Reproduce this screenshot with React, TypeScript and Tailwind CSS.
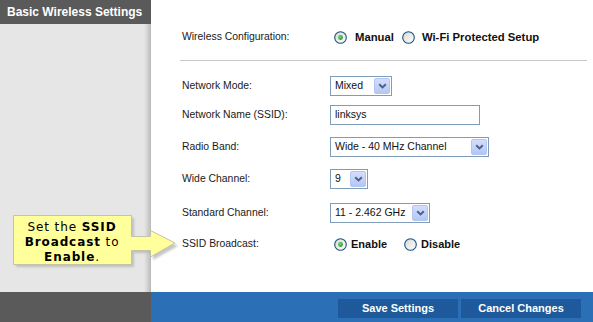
import React from "react";

const font = { fontFamily: '"Liberation Sans", Arial, sans-serif' };

function Radio({ checked }: { checked?: boolean }) {
  return (
    <svg width="13" height="13" viewBox="0 0 13 13" className="shrink-0">
      <defs>
        <linearGradient id="rg" x1="0" y1="0" x2="1" y2="1">
          <stop offset="0" stopColor="#d8d8d2" />
          <stop offset="1" stopColor="#ffffff" />
        </linearGradient>
        <radialGradient id="dot" cx="0.4" cy="0.4" r="0.6">
          <stop offset="0" stopColor="#7be07b" />
          <stop offset="1" stopColor="#1e9a1e" />
        </radialGradient>
      </defs>
      <circle cx="6.5" cy="6.5" r="5.8" fill="url(#rg)" stroke="#1c5180" strokeWidth="1.1" />
      {checked && <circle cx="6.5" cy="6.5" r="2.4" fill="url(#dot)" />}
    </svg>
  );
}

function Chevron() {
  return (
    <svg width="9" height="6" viewBox="0 0 9 6">
      <path d="M1.2 1.2 L4.5 4.4 L7.8 1.2" fill="none" stroke="#4d6185" strokeWidth="2" />
    </svg>
  );
}

function Select({ value, className }: { value: string; className: string }) {
  return (
    <div className={`flex h-[20px] items-center border border-[#7f9db9] bg-white ${className}`}>
      <span className="flex-1 whitespace-nowrap pl-[4px] text-[10.5px] text-[#111]">{value}</span>
      <div className="mr-px flex h-[16px] w-[16px] items-center justify-center rounded-[2px] border border-[#b2c6f1] bg-linear-to-b from-[#d3defd] to-[#b3c7f6]">
        <Chevron />
      </div>
    </div>
  );
}

function Row({ label, children, className }: { label: string; children: React.ReactNode; className: string }) {
  return (
    <div className={`flex h-[20px] items-center ${className}`}>
      <div className="w-[150px] shrink-0 pl-[2px] text-[10.4px] text-[#1a1a1a]">{label}</div>
      {children}
    </div>
  );
}

export default function App() {
  return (
    <div className="relative flex h-[322px] w-[593px] flex-col overflow-hidden bg-white" style={font}>
      <div className="flex h-[292px]">
        <div className="flex w-[151px] flex-col">
          <div className="flex h-[24px] items-center bg-[#5a5a5a] pl-[7px] text-[12px] font-bold text-white">
            Basic Wireless Settings
          </div>
          <div className="flex flex-1">
            <div className="flex-1 bg-[#e6e6e6]" />
            <div className="w-[7px] bg-linear-to-r from-[#e6e6e6] via-[#d2d2d2] to-[#b8b8b8]" />
          </div>
        </div>
        <div className="flex flex-1 flex-col pl-[29px] pr-[6px]">
          <Row label="Wireless Configuration:" className="mt-[27px]">
            <div className="flex items-center pl-[4px] text-[11.3px] font-bold text-[#111]">
              <Radio checked />
              <span className="ml-[8px]">Manual</span>
              <span className="ml-[8px]"><Radio /></span>
              <span className="ml-[7px]">Wi-Fi Protected Setup</span>
            </div>
          </Row>
          <div className="mt-[13px] h-px bg-[#c8c8c8]" />
          <Row label="Network Mode:" className="mt-[15px]">
            <Select value="Mixed" className="w-[62px]" />
          </Row>
          <Row label="Network Name (SSID):" className="mt-[9px]">
            <div className="flex h-[20px] w-[150px] items-center border border-[#7f9db9] bg-white pl-[4px] text-[10.5px] text-[#111]">
              linksys
            </div>
          </Row>
          <Row label="Radio Band:" className="mt-[12px]">
            <Select value="Wide - 40 MHz Channel" className="w-[159px]" />
          </Row>
          <Row label="Wide Channel:" className="mt-[12px]">
            <Select value="9" className="w-[38px]" />
          </Row>
          <Row label="Standard Channel:" className="mt-[14px]">
            <Select value="11 - 2.462 GHz" className="w-[100px]" />
          </Row>
          <Row label="SSID Broadcast:" className="mt-[11px]">
            <div className="flex items-center pl-[4px] text-[11px] font-bold text-[#111]">
              <Radio checked />
              <span className="ml-[4px]">Enable</span>
              <span className="ml-[17px]"><Radio /></span>
              <span className="ml-[4px]">Disable</span>
            </div>
          </Row>
        </div>
      </div>
      <div className="flex h-[30px]">
        <div className="w-[151px] bg-[#5a5a5a]" />
        <div className="flex flex-1 items-start justify-end gap-[3px] bg-[#2b70b7] pr-[12px] pt-[7px]">
          <div className="flex h-[19px] w-[120px] items-center justify-center bg-[#1e5a9b] text-[11px] font-bold text-white">
            Save Settings
          </div>
          <div className="flex h-[19px] w-[120px] items-center justify-center bg-[#1e5a9b] text-[11px] font-bold text-white">
            Cancel Changes
          </div>
        </div>
      </div>

      {/* callout overlay */}
      <div className="absolute left-0 top-[205px] h-[70px] w-[185px]">
        <svg width="185" height="70" viewBox="0 0 185 70" className="absolute left-0 top-0">
          <defs>
            <filter id="blur" x="-10%" y="-10%" width="130%" height="140%">
              <feGaussianBlur stdDeviation="1.2" />
            </filter>
          </defs>
          <path
            d="M16 13 H134 V34 H153 V28 L178 41 L153 55 V48 H134 V62 H16 Z"
            fill="#b4b4b4"
            opacity="0.75"
            filter="url(#blur)"
          />
          <path
            d="M13.5 10.5 H131.5 V31.5 H150.5 V25.5 L175 38 L150.5 52 V45.5 H131.5 V59.5 H13.5 Z"
            fill="#ffff9c"
            stroke="#c4c4a8"
            strokeWidth="1"
          />
        </svg>
        <div
          className="absolute left-[13px] top-[15px] w-[118px] text-center text-[12px] leading-[15px] tracking-[0.9px] text-black"
          style={{ fontFamily: '"DejaVu Sans", Verdana, sans-serif' }}
        >
          Set the <b>SSID</b>
          <br />
          <b>Broadcast</b> to
          <br />
          <b>Enable</b>.
        </div>
      </div>
    </div>
  );
}
